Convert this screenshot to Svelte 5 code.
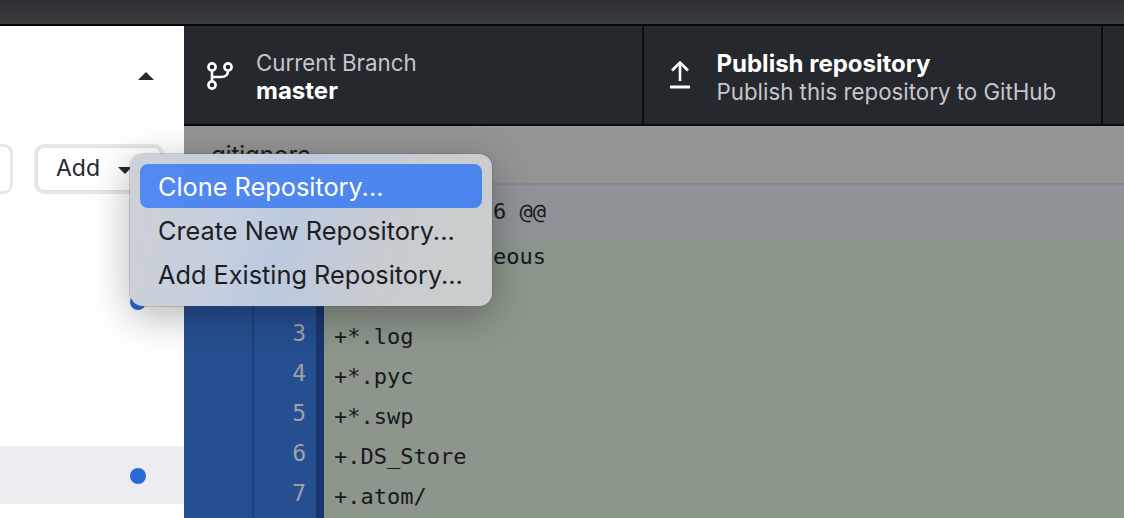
<script>
  const repoRows = [false, true, false, false, true];
  const diffLines = [
    { num: "", text: "+# Miscellaneous" },
    { num: "", text: "" },
    { num: "3", text: "+*.log" },
    { num: "4", text: "+*.pyc" },
    { num: "5", text: "+*.swp" },
    { num: "6", text: "+.DS_Store" },
    { num: "7", text: "+.atom/" }
  ];
  const menuItems = ["Clone Repository...", "Create New Repository...", "Add Existing Repository..."];
</script>

<div class="window">
  <div class="titlebar"></div>
  <div class="main">
    <aside class="sidebar">
      <div class="side-head">
        <span class="caret-up"></span>
      </div>
      <div class="filter-row">
        <div class="filter"></div>
        <div class="add">
          <span class="add-label">Add</span>
          <span class="caret-down"></span>
        </div>
      </div>
      <div class="repo-list">
        {#each repoRows as dot, i}
          <div class="repo-row" class:selected={i === 4}>
            {#if dot}<span class="dot"></span>{/if}
          </div>
        {/each}
      </div>
    </aside>

    <section class="content">
      <div class="toolbar">
        <div class="tool branch">
          <svg width="30" height="30" viewBox="0 0 30 30" fill="none" stroke="#fff" stroke-width="2.6">
            <circle cx="7" cy="7" r="3.6" />
            <circle cx="23" cy="7" r="3.6" />
            <circle cx="7" cy="25" r="3.6" />
            <path d="M7 10.600V21.400M23 10.600c0 5-3 6.400-7 6.400H7" />
          </svg>
          <div class="tool-text">
            <div class="light">Current Branch</div>
            <div class="bold">master</div>
          </div>
        </div>
        <div class="tool publish">
          <svg width="30" height="30" viewBox="0 0 30 30" fill="none" stroke="#fff" stroke-width="2.6">
            <path d="M15 2.500V21M7 10.500L15 2.500L23 10.500" />
            <path d="M5 27H25" stroke-width="3" />
          </svg>
          <div class="tool-text lower">
            <div class="bold">Publish repository</div>
            <div class="light">Publish this repository to GitHub</div>
          </div>
        </div>
        <div class="tool rest"></div>
      </div>

      <div class="file-head">.gitignore</div>
      <div class="diff">
        <div class="hunk">
          <div class="gutter"></div>
          <code>@@ -0,0 +1,16 @@</code>
        </div>
        {#each diffLines as line}
          <div class="line">
            <div class="gutter">
              <span class="old"></span>
              <span class="new">{line.num}</span>
              <span class="mark"></span>
            </div>
            <code>{line.text}</code>
          </div>
        {/each}
      </div>
    </section>
  </div>

  <div class="menu">
    {#each menuItems as item, i}
      <div class="menu-item" class:active={i === 0}>{item}</div>
    {/each}
  </div>
</div>

<style>
  :global(body) {
    margin: 0;
    background: #fff;
  }

  .window {
    position: relative;
    width: 1124px;
    height: 518px;
    overflow: hidden;
    font-family: Inter, "Liberation Sans", sans-serif;
  }

  .titlebar {
    height: 24px;
    background: linear-gradient(#2d2f33, #3a3c40);
    border-bottom: 2px solid #060607;
  }

  .main {
    display: flex;
    height: 492px;
  }

  .sidebar {
    width: 184px;
    flex: none;
    background: #fff;
  }

  .side-head {
    height: 100px;
    display: flex;
    justify-content: flex-end;
    align-items: center;
    padding-right: 30px;
    box-sizing: border-box;
  }

  .caret-up {
    border-left: 8px solid transparent;
    border-right: 8px solid transparent;
    border-bottom: 8px solid #24292e;
  }

  .filter-row {
    display: flex;
    justify-content: flex-end;
    gap: 21px;
    padding-top: 18px;
    padding-right: 20px;
  }

  .filter {
    width: 30px;
    margin-left: -17px;
    height: 50px;
    box-sizing: border-box;
    border: 3px solid #e6e7e9;
    border-radius: 9px;
    flex: none;
  }

  .add {
    width: 130px;
    height: 50px;
    box-sizing: border-box;
    border: 3px solid #e6e7e9;
    box-shadow: inset 0 0 0 1px #dcdee1;
    border-radius: 10px;
    display: flex;
    align-items: center;
    padding-left: 19px;
    gap: 18px;
    font-size: 23px;
    color: #24292e;
    flex: none;
  }

  .add-label {
    margin-top: -3px;
  }

  .caret-down {
    border-left: 7px solid transparent;
    border-right: 7px solid transparent;
    border-top: 7px solid #24292e;
    margin-top: 2px;
  }

  .repo-list {
    margin-top: 20px;
  }

  .repo-row {
    height: 58px;
    display: flex;
    justify-content: flex-end;
    align-items: center;
    padding-right: 38px;
  }

  .repo-row.selected {
    background: #ecedf1;
  }

  .dot {
    width: 16px;
    height: 16px;
    margin-top: 2px;
    border-radius: 50%;
    background: #2a69d6;
  }

  .content {
    flex: 1;
    min-width: 0;
    display: flex;
    flex-direction: column;
  }

  .toolbar {
    display: flex;
    height: 100px;
    box-sizing: border-box;
    flex: none;
    background: #25282d;
    border-bottom: 2px solid #0c0d0f;
  }

  .tool {
    display: flex;
    align-items: center;
    gap: 21px;
    padding-left: 21px;
    box-sizing: border-box;
    border-right: 2px solid #0c0d0f;
  }

  .branch {
    width: 460px;
  }

  .publish {
    width: 460px;
    gap: 22px;
  }

  .rest {
    flex: 1;
    border-right: none;
  }

  .tool-text {
    line-height: 28px;
    font-size: 22.3px;
    margin-top: 4px;
  }

  .tool-text.lower {
    margin-top: 6px;
  }

  .light {
    color: #c3c7cd;
  }

  .bold {
    color: #fff;
    font-weight: 700;
    font-size: 24px;
  }

  .file-head {
    height: 59px;
    flex: none;
    box-sizing: border-box;
    padding: 14px 0 0 20px;
    font-size: 24px;
    color: #1b1d20;
    background: #949494;
    border-bottom: 2px solid #888a8c;
  }

  .diff {
    flex: 1;
    font-family: "DejaVu Sans Mono", "Liberation Mono", monospace;
    font-size: 22px;
    color: #17191b;
  }

  code {
    font-family: inherit;
    padding-left: 10px;
    line-height: 38px;
    white-space: pre;
  }

  .hunk {
    height: 53px;
    display: flex;
    align-items: center;
    background: #8f9397;
  }

  .hunk code {
    line-height: 40px;
  }

  .hunk .gutter {
    background: #8f9397;
  }

  .line {
    height: 40px;
    display: flex;
    background: #8c968a;
  }

  .gutter {
    width: 140px;
    flex: none;
    display: flex;
    background: #264f91;
    color: #9ea1a9;
  }

  .old {
    width: 70px;
    border-right: 2px solid #1d4079;
    box-sizing: border-box;
  }

  .new {
    width: 52px;
    text-align: right;
    line-height: 30px;
    font-size: 23px;
  }

  .mark {
    width: 8px;
    margin-left: 10px;
    background: #193670;
  }

  .menu {
    position: absolute;
    left: 130px;
    top: 154px;
    width: 362px;
    height: 152px;
    box-sizing: border-box;
    padding: 10px;
    border-radius: 13px;
    background: linear-gradient(105deg, #ced1d6 0%, #c6cfde 28%, #bccae0 42%, #c9cccf 72%, #cbcecd 100%);
    box-shadow: 0 0 0 1px rgba(90, 90, 90, 0.25), 0 10px 40px rgba(0, 0, 0, 0.3);
    font-size: 25.3px;
    color: #1d2023;
  }

  .menu-item {
    height: 44px;
    line-height: 45px;
    padding-left: 18px;
    border-radius: 8px;
  }

  .menu-item.active {
    background: linear-gradient(90deg, #5289f1, #4a84ec);
    color: #fff;
  }
</style>
